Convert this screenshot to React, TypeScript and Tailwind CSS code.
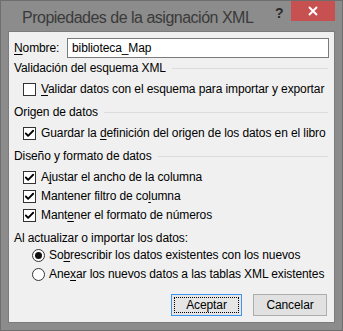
import { Check } from "lucide-react";

const font = { fontFamily: '"Liberation Sans", Arial, sans-serif' };

function U({ children }: { children: string }) {
  return <span className="underline underline-offset-2">{children}</span>;
}

function SectionHeader({ text, className }: { text: string; className: string }) {
  return (
    <div className={"flex items-center h-[16px] " + className}>
      <span className="whitespace-nowrap">{text}</span>
      <div className="flex-1 ml-[6px] mr-[1px] h-[1px] bg-[#dcdcdc]" />
    </div>
  );
}

function CheckRow({ checked, children, className }: { checked: boolean; children: React.ReactNode; className: string }) {
  return (
    <div className={"flex items-center h-[18px] pl-[9px] " + className}>
      <div className="shrink-0 w-[13px] h-[13px] border border-[#333333] bg-white flex items-center justify-center">
        {checked && <Check size={11} strokeWidth={4} color="#000" />}
      </div>
      <span className="ml-[5px] whitespace-nowrap">{children}</span>
    </div>
  );
}

function RadioRow({ checked, children, className }: { checked: boolean; children: React.ReactNode; className: string }) {
  return (
    <div className={"flex items-center h-[18px] pl-[18px] " + className}>
      <div className="shrink-0 w-[13px] h-[13px] rounded-full border border-[#333333] bg-white flex items-center justify-center">
        {checked && <div className="w-[7px] h-[7px] rounded-full bg-[#111]" />}
      </div>
      <span className="ml-[4px] whitespace-nowrap">{children}</span>
    </div>
  );
}

export default function App() {
  return (
    <div style={font} className="w-[343px] h-[331px] bg-[#8c8c8c] border border-[#6e6e6e] flex flex-col">
      <div className="h-[30px] flex items-start relative">
        <span className="ml-[21px] mt-[5px] text-[16px] tracking-[-0.5px] text-[#3a3a3a] whitespace-nowrap">
          Propiedades de la asignación XML
        </span>
        <span className="absolute left-[274px] top-[2px] text-[14px] font-bold text-[#2a2a2a]">?</span>
        <div className="absolute left-[290px] top-0 w-[44px] h-[20px] bg-[#c75050] flex items-center justify-center">
          <svg width="10" height="10" viewBox="0 0 10 10">
            <path d="M1 1 L9 9 M9 1 L1 9" stroke="white" strokeWidth="2" />
          </svg>
        </div>
      </div>
      <div className="mx-[7px] mb-[7px] flex-1 bg-[#f0f0f0] border border-[#7c7c7c] pl-[5px] pr-[5px] pt-[6px] text-[12px] tracking-[-0.1px] text-black flex flex-col">
        <div className="flex items-center h-[20px]">
          <span className="w-[53px]"><U>N</U>ombre:</span>
          <div className="flex-1 h-[20px] border border-[#7a7a7a] bg-white flex items-center pl-[4px]">
            biblioteca_Map
          </div>
        </div>
        <SectionHeader text="Validación del esquema XML" className="mt-[2px]" />
        <CheckRow checked={false} className="mt-[4px]">
          <U>V</U>alidar datos con el esquema para importar y exportar
        </CheckRow>
        <SectionHeader text="Origen de datos" className="mt-[6px]" />
        <CheckRow checked={true} className="mt-[4px]">
          Guardar la <U>d</U>efinición del origen de los datos en el libro
        </CheckRow>
        <SectionHeader text="Diseño y formato de datos" className="mt-[6px]" />
        <CheckRow checked={true} className="mt-[4px]">
          A<U>j</U>ustar el ancho de la columna
        </CheckRow>
        <CheckRow checked={true} className="mt-[1px]">
          Mantener filtro de co<U>l</U>umna
        </CheckRow>
        <CheckRow checked={true} className="mt-[1px]">
          Mant<U>e</U>ner el formato de números
        </CheckRow>
        <div className="flex items-center h-[16px] mt-[6px]">Al actualizar o importar los datos:</div>
        <RadioRow checked={true} className="mt-[0px]">
          So<U>b</U>rescribir los datos existentes con los nuevos
        </RadioRow>
        <RadioRow checked={false} className="mt-[1px]">
          Ane<U>x</U>ar los nuevos datos a las tablas XML existentes
        </RadioRow>
        <div className="flex justify-end mt-[11px] mr-[2px] gap-[11px]">
          <div className="w-[71px] h-[22px] border border-[#3c96f0] bg-[#e5e5e5] p-[2px]">
            <div className="w-full h-full border border-dotted border-black flex items-center justify-center">
              Aceptar
            </div>
          </div>
          <div className="w-[74px] h-[22px] border border-[#adadad] bg-[#e1e1e1] flex items-center justify-center">
            Cancelar
          </div>
        </div>
      </div>
    </div>
  );
}
